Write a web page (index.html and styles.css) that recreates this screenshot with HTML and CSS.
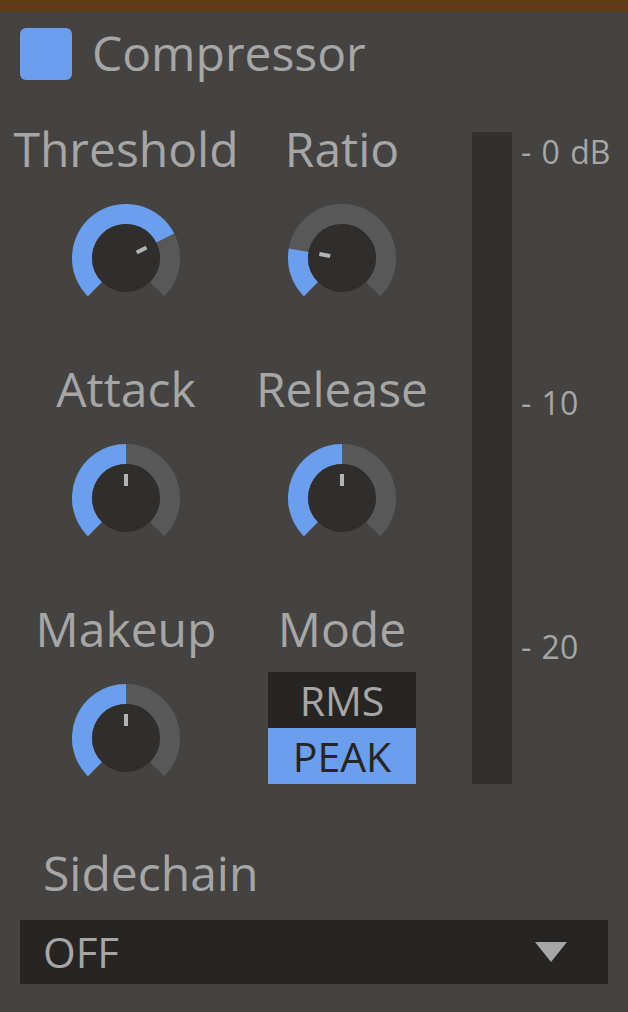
FILE: index.html
```html
<!DOCTYPE html>
<html>
<head>
<meta charset="utf-8">
<link rel="stylesheet" href="styles.css">
</head>
<body>
<div class="topbar"></div>
<div class="header">
  <div class="enable"></div>
  <div class="title">Compressor</div>
</div>
<div class="main">
  <div class="controls">
    <div class="cell">
      <div class="label">Threshold</div>
      <svg class="knob" viewBox="0 0 108 108" width="108" height="108">
        <path class="track" d="M22.89 85.11 A44 44 0 1 1 85.11 85.11"/>
        <path class="value" d="M22.89 85.11 A44 44 0 1 1 93.2 34.0"/>
        <circle class="cap" cx="54" cy="54" r="34"/>
        <line class="pointer" x1="64.69" y1="48.55" x2="74.49" y2="43.56"/>
      </svg>
    </div>
    <div class="cell">
      <div class="label">Ratio</div>
      <svg class="knob" viewBox="0 0 108 108" width="108" height="108">
        <path class="track" d="M22.89 85.11 A44 44 0 1 1 85.11 85.11"/>
        <path class="value" d="M22.89 85.11 A44 44 0 0 1 10.67 46.36"/>
        <circle class="cap" cx="54" cy="54" r="34"/>
        <line class="pointer" x1="42.18" y1="51.92" x2="31.35" y2="50.0"/>
      </svg>
    </div>
    <div class="cell">
      <div class="label">Attack</div>
      <svg class="knob" viewBox="0 0 108 108" width="108" height="108">
        <path class="track" d="M22.89 85.11 A44 44 0 1 1 85.11 85.11"/>
        <path class="value" d="M22.89 85.11 A44 44 0 0 1 54 10"/>
        <circle class="cap" cx="54" cy="54" r="34"/>
        <line class="pointer" x1="54" y1="42" x2="54" y2="30"/>
      </svg>
    </div>
    <div class="cell">
      <div class="label">Release</div>
      <svg class="knob" viewBox="0 0 108 108" width="108" height="108">
        <path class="track" d="M22.89 85.11 A44 44 0 1 1 85.11 85.11"/>
        <path class="value" d="M22.89 85.11 A44 44 0 0 1 54 10"/>
        <circle class="cap" cx="54" cy="54" r="34"/>
        <line class="pointer" x1="54" y1="42" x2="54" y2="30"/>
      </svg>
    </div>
    <div class="cell">
      <div class="label">Makeup</div>
      <svg class="knob" viewBox="0 0 108 108" width="108" height="108">
        <path class="track" d="M22.89 85.11 A44 44 0 1 1 85.11 85.11"/>
        <path class="value" d="M22.89 85.11 A44 44 0 0 1 54 10"/>
        <circle class="cap" cx="54" cy="54" r="34"/>
        <line class="pointer" x1="54" y1="42" x2="54" y2="30"/>
      </svg>
    </div>
    <div class="cell">
      <div class="label">Mode</div>
      <div class="modes">
        <div class="mode">RMS</div>
        <div class="mode active">PEAK</div>
      </div>
    </div>
  </div>
  <div class="meter"></div>
  <div class="scale">
    <div class="tick t0">- 0 dB</div>
    <div class="tick t10">- 10</div>
    <div class="tick t20">- 20</div>
  </div>
</div>
<div class="sidechain-label">Sidechain</div>
<div class="dropdown">
  <span class="dd-text">OFF</span>
  <svg class="dd-arrow" viewBox="0 0 32 20" width="32" height="20"><polygon points="0,0 32,0 16,20"/></svg>
</div>
</body>
</html>
```
FILE: styles.css
```css
html, body {
  margin: 0;
  padding: 0;
  background: #444341;
  width: 628px;
  height: 1012px;
  overflow: hidden;
  font-family: "Open Sans", "DejaVu Sans", sans-serif;
  color: #a6a6a6;
}
.topbar {
  height: 12px;
  background: #5e3d17;
}
.header {
  display: flex;
  align-items: center;
  padding: 16px 20px 0 20px;
  height: 52px;
}
.enable {
  width: 52px;
  height: 52px;
  border-radius: 6px;
  background: #6b9eec;
}
.title {
  margin-left: 20px;
  font-size: 48px;
  line-height: 52px;
  margin-top: -2px;
}
.main {
  display: flex;
  margin-top: 43px;
  height: 720px;
}
.controls {
  display: grid;
  grid-template-columns: 216px 216px;
  grid-auto-rows: 240px;
  margin-left: 18px;
}
.cell {
  display: flex;
  flex-direction: column;
  align-items: center;
}
.label {
  font-size: 48px;
  line-height: 52px;
}
.knob {
  margin-top: 29px;
  display: block;
}
.track {
  fill: none;
  stroke: #585858;
  stroke-width: 20;
}
.value {
  fill: none;
  stroke: #6b9eec;
  stroke-width: 20;
}
.cap {
  fill: #2f2e2d;
}
.pointer {
  stroke: #b4b4b4;
  stroke-width: 4;
}
.modes {
  margin-top: 17px;
  width: 148px;
  display: flex;
  flex-direction: column;
}
.mode {
  height: 56px;
  line-height: 56px;
  text-align: center;
  font-size: 41px;
  background: #262524;
  color: #a6a6a6;
}
.mode.active {
  background: #6b9eec;
  color: #262524;
}
.meter {
  width: 40px;
  height: 652px;
  margin-top: 9px;
  margin-left: 22px;
  background: #31302e;
}
.scale {
  display: flex;
  flex-direction: column;
  margin-left: 9px;
}
.tick {
  font-size: 32px;
  line-height: 40px;
  white-space: nowrap;
  word-spacing: 2px;
}
.t0 { margin-top: 9px; }
.t10 { margin-top: 211px; }
.t20 { margin-top: 204px; }
.sidechain-label {
  margin-top: 4px;
  margin-left: 43px;
  font-size: 48px;
  line-height: 52px;
}
.dropdown {
  margin: 21px 20px 0 20px;
  height: 64px;
  background: #262524;
  display: flex;
  align-items: center;
  justify-content: space-between;
  padding: 0 41px 0 23px;
}
.dd-text {
  font-size: 42px;
  line-height: 64px;
}
.dd-arrow {
  display: block;
  fill: #a6a6a6;
}
```
